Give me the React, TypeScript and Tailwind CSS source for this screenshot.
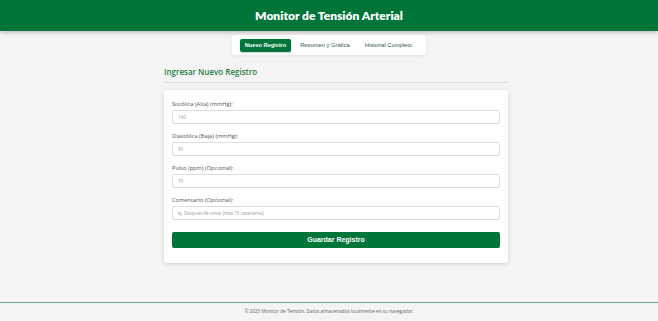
const fields = [
  { label: "Sistólica (Alta) (mmHg):", placeholder: "140" },
  { label: "Diastólica (Baja) (mmHg):", placeholder: "90" },
  { label: "Pulso (ppm) (Opcional):", placeholder: "70" },
  { label: "Comentario (Opcional):", placeholder: "ej. Después de cenar (max 70 caracteres)" },
];

const tabs = ["Nuevo Registro", "Resumen y Gráfica", "Historial Completo"];

export default function App() {
  return (
    <div className="flex min-h-screen flex-col bg-[#f4f4f4] font-['Open_Sans',sans-serif] text-[#333]">
      <header className="flex h-[31px] items-center justify-center bg-[#00753a] shadow-[0_2px_4px_rgba(0,0,0,0.2)]">
        <h1 className="font-['Lato',sans-serif] text-[12px] font-extrabold leading-none text-white">
          Monitor de Tensión Arterial
        </h1>
      </header>

      <main className="flex-1">
        <nav className="mx-auto mt-[4px] flex h-[20px] w-[194px] items-center justify-center gap-[3px] rounded-[3px] bg-white shadow-[0_1px_3px_rgba(0,0,0,0.08)]">
          {tabs.map((t, i) => (
            <button
              key={t}
              className={
                i === 0
                  ? "h-[13px] rounded-[2px] bg-[#00753a] px-[5px] font-['Liberation_Sans',sans-serif] text-[5.6px] font-bold text-white shadow-[0_1px_2px_rgba(0,0,0,0.2)]"
                  : "h-[13px] px-[6px] font-['Liberation_Sans',sans-serif] text-[5.8px] text-[#2f5e45]"
              }
            >
              {t}
            </button>
          ))}
        </nav>

        <section className="mx-auto mt-[11px] w-[358px] pl-[14px]">
          <h2 className="border-b border-[#dcdcdc] pb-[4px] text-[8px] font-semibold leading-[12px] text-[#1f7c47]">
            Ingresar Nuevo Registro
          </h2>

          <form className="mt-[7px] rounded-[3px] bg-white px-[8px] pt-[10px] pb-[15px] shadow-[0_1px_4px_rgba(0,0,0,0.15)]">
            {fields.map((f, i) => (
              <div key={f.label} className={i === fields.length - 1 ? "mb-[4px] flex flex-col" : "mb-[8px] flex flex-col"}>
                <label className="mb-[2px] text-[5.7px] leading-[8px] text-[#555]">{f.label}</label>
                <input
                  placeholder={f.placeholder}
                  className="h-[14px] w-full rounded-[2px] border border-[#dddddd] bg-white px-[5px] text-[4.5px] placeholder:text-[#999] outline-none"
                />
              </div>
            ))}
            <button
              type="button"
              className="h-[16px] w-full rounded-[2px] bg-[#00753a] font-['Liberation_Sans',sans-serif] text-[7px] font-bold text-white"
            >
              Guardar Registro
            </button>
          </form>
        </section>
      </main>

      <footer className="flex h-[19px] items-center justify-center border-t border-[#6fa888] text-[4.7px] text-[#666]">
        © 2025 Monitor de Tensión. Datos almacenados localmente en su navegador.
      </footer>
    </div>
  );
}
